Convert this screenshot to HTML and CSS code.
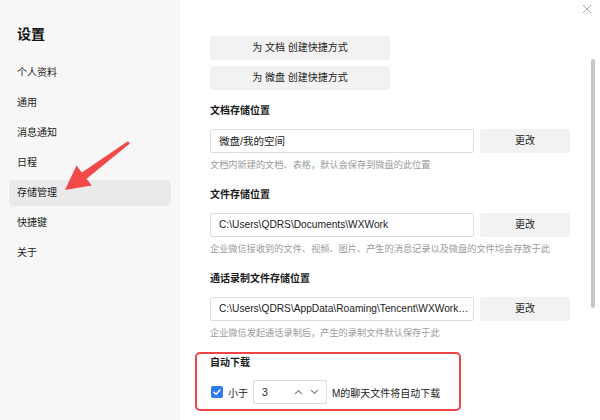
FILE: index.html
```html
<!DOCTYPE html>
<html lang="zh-CN">
<head>
<meta charset="utf-8">
<title>设置</title>
<link rel="stylesheet" href="styles.css">
</head>
<body>
<div class="window">
  <aside class="sidebar">
    <h1 class="side-title">设置</h1>
    <ul class="menu">
      <li class="menu-item">个人资料</li>
      <li class="menu-item">通用</li>
      <li class="menu-item">消息通知</li>
      <li class="menu-item">日程</li>
      <li class="menu-item active">存储管理</li>
      <li class="menu-item">快捷键</li>
      <li class="menu-item">关于</li>
    </ul>
  </aside>
  <main class="content">
    <div class="shortcut-btns">
      <div class="btn wide">为 文档 创建快捷方式</div>
      <div class="btn wide">为 微盘 创建快捷方式</div>
    </div>

    <section class="section">
      <h2 class="sec-title">文档存储位置</h2>
      <div class="path-row">
        <div class="path-input">微盘/我的空间</div>
        <div class="btn change">更改</div>
      </div>
      <p class="help">文档内新建的文档、表格，默认会保存到微盘的此位置</p>
    </section>

    <section class="section">
      <h2 class="sec-title">文件存储位置</h2>
      <div class="path-row">
        <div class="path-input latin">C:\Users\QDRS\Documents\WXWork</div>
        <div class="btn change">更改</div>
      </div>
      <p class="help">企业微信接收到的文件、视频、图片、产生的消息记录以及微盘的文件均会存放于此</p>
    </section>

    <section class="section">
      <h2 class="sec-title">通话录制文件存储位置</h2>
      <div class="path-row">
        <div class="path-input latin">C:\Users\QDRS\AppData\Roaming\Tencent\WXWork…</div>
        <div class="btn change">更改</div>
      </div>
      <p class="help">企业微信发起通话录制后，产生的录制文件默认保存于此</p>
    </section>

    <section class="auto-box">
      <h2 class="sec-title">自动下载</h2>
      <div class="auto-row">
        <span class="checkbox">
          <svg width="12" height="12" viewBox="0 0 12 12"><path d="M3 6.2 L5.1 8.2 L9 4" fill="none" stroke="#fff" stroke-width="1.5" stroke-linecap="round" stroke-linejoin="round"/></svg>
        </span>
        <span class="lbl">小于</span>
        <div class="spinner">
          <span class="spin-val">3</span>
          <span class="chev">
            <svg width="9" height="6" viewBox="0 0 9 6"><path d="M1 5 L4.5 1.5 L8 5" fill="none" stroke="#888" stroke-width="1.1"/></svg>
            <svg width="9" height="6" viewBox="0 0 9 6"><path d="M1 1 L4.5 4.5 L8 1" fill="none" stroke="#888" stroke-width="1.1"/></svg>
          </span>
        </div>
        <span class="lbl">M的聊天文件将自动下载</span>
      </div>
    </section>
  </main>

  <svg class="close" width="10" height="10" viewBox="0 0 10 10"><path d="M1 1 L9 9 M9 1 L1 9" stroke="#a8a8a8" stroke-width="1"/></svg>
  <div class="scrollbar"></div>
  <svg class="arrow" width="600" height="420" viewBox="0 0 600 420">
    <polygon points="127.1,141.8 81.8,172.4 76.5,165.5 65,190 91.8,185.6 86.6,178.8 128.9,144.2" fill="#f24848"/>
    <circle cx="128" cy="143" r="1.6" fill="#f24848"/>
  </svg>
</div>
</body>
</html>
```
FILE: styles.css
```css
* { box-sizing: border-box; }
html, body {
  margin: 0;
  padding: 0;
  width: 600px;
  height: 420px;
  overflow: hidden;
  background: #fff;
}
body {
  font-family: "Liberation Sans", "Noto Sans CJK SC", sans-serif;
  color: #222;
  font-size: 10px;
}
.window {
  position: relative;
  display: flex;
  width: 600px;
  height: 420px;
}
.sidebar {
  width: 180px;
  flex: none;
  background: #f7f7f7;
  padding-top: 24px;
}
.side-title {
  margin: 0 0 16px 17px;
  font-size: 14px;
  line-height: 20px;
  font-weight: bold;
  color: #111;
}
.menu {
  list-style: none;
  margin: 0;
  padding: 0;
}
.menu-item {
  margin: 0 9px 4px 9px;
  height: 26px;
  line-height: 26px;
  padding-left: 8px;
  border-radius: 4px;
  font-size: 10px;
  color: #222;
}
.menu-item.active {
  background: #eaeaec;
}
.content {
  flex: 1;
  padding: 36px 0 0 30px;
}
.shortcut-btns {
  display: flex;
  flex-direction: column;
  gap: 6px;
  margin-bottom: 14px;
}
.btn {
  background: #f2f2f2;
  border-radius: 3px;
  height: 24px;
  line-height: 24px;
  text-align: center;
  font-size: 10px;
  color: #222;
}
.btn.wide { width: 180px; }
.btn.change { width: 90px; flex: none; }
.section {
  margin-bottom: 16px;
}
.sec-title {
  margin: 0;
  font-size: 10px;
  line-height: 14px;
  font-weight: bold;
  color: #1a1a1a;
}
.path-row {
  display: flex;
  gap: 6px;
  margin-top: 11px;
}
.path-input {
  width: 264px;
  flex: none;
  height: 24px;
  line-height: 22px;
  border: 1px solid #dcdcdc;
  border-radius: 2px;
  padding: 0 0 0 8px;
  font-size: 10.5px;
  color: #222;
  white-space: nowrap;
}
.path-input.latin {
  font-size: 10.2px;
}
.help {
  margin: 5px 0 0 0;
  font-size: 9.2px;
  line-height: 14px;
  color: #9a9a9a;
  white-space: nowrap;
}
.auto-box {
  margin: -4px 0 0 -15px;
  width: 266px;
  border: 2px solid #ef4444;
  border-radius: 5px;
  padding: 2px 13px 5px 13px;
}
.auto-row {
  display: flex;
  align-items: center;
  gap: 5px;
  margin-top: 10px;
}
.checkbox {
  width: 12px;
  height: 12px;
  border-radius: 2px;
  background: #2c7bef;
  display: flex;
  margin-left: 1px;
}
.lbl {
  font-size: 10px;
  color: #222;
}
.spinner {
  width: 74px;
  height: 24px;
  border: 1px solid #dcdcdc;
  border-radius: 2px;
  display: flex;
  align-items: center;
  justify-content: space-between;
  padding: 0 7px 0 8px;
}
.spin-val { font-size: 10.5px; }
.chev {
  display: flex;
  gap: 7px;
  align-items: center;
}
.close {
  position: absolute;
  left: 582px;
  top: 4px;
}
.scrollbar {
  position: absolute;
  left: 591px;
  top: 59px;
  width: 4px;
  height: 249px;
  background: #c6c6c6;
  border-radius: 2px;
}
.arrow {
  position: absolute;
  left: 0;
  top: 0;
  pointer-events: none;
}
```
